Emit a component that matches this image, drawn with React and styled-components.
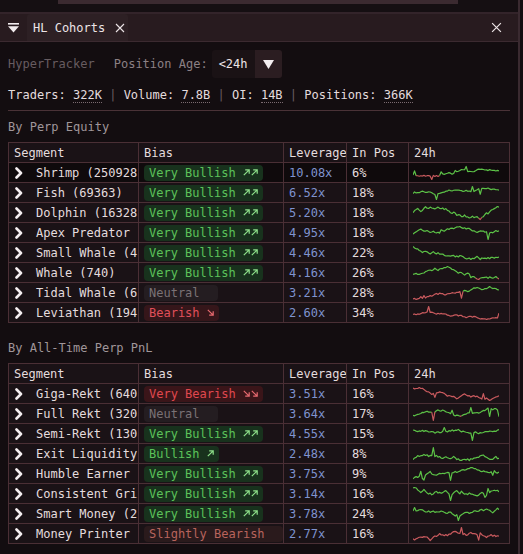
import React from 'react'
import styled, { createGlobalStyle } from 'styled-components'

const GlobalStyle = createGlobalStyle`
  html, body {
    margin: 0;
    padding: 0;
    background: #130d10;
  }
  body {
    font-family: "DejaVu Sans Mono", "Liberation Mono", monospace;
    font-size: 12px;
    color: #e4dcde;
  }
`

const GREEN = '#5cc247'
const RED = '#c95a5e'

const Panel = styled.div`
  width: 520px;
  min-height: 554px;
  box-sizing: border-box;
  border-right: 2px solid #3a2a30;
`

const TopStrip = styled.div`
  height: 12px;
  background: #150f12;
  border-bottom: 2px solid #33242a;
`

const StripBar = styled.div`
  margin-left: 58px;
  width: 400px;
  height: 4px;
  background: #3b2a30;
`

const Header = styled.div`
  height: 27px;
  display: flex;
  align-items: stretch;
  background: #281b1f;
  border-bottom: 1px solid #3b2a30;
`

const MenuIcon = styled.div`
  width: 27px;
  display: flex;
  align-items: center;
  justify-content: center;
`

const Tab = styled.div`
  width: 101px;
  display: flex;
  align-items: center;
  padding-left: 6px;
  box-sizing: border-box;
  background: #2d2024;
  border-top-left-radius: 3px;
  border-top-right-radius: 3px;
  color: #ece4e6;
`

const TabClose = styled.span`
  margin-left: 10px;
  display: flex;
`

const Spacer = styled.div`
  flex: 1;
`

const HeaderClose = styled.div`
  display: flex;
  align-items: center;
  margin-right: 16px;
`

const Content = styled.div`
  padding: 8px 0 0 8px;
`

const FilterRow = styled.div`
  height: 28px;
  display: flex;
  align-items: center;
`

const Label = styled.span`
  color: ${p => p.$dim ? '#675c60' : '#8c8084'};
  margin-left: ${p => p.$gap || 0}px;
`

const Select = styled.div`
  margin-left: 4px;
  height: 28px;
  display: flex;
  border-radius: 3px;
  overflow: hidden;
`

const SelectValue = styled.div`
  width: 43px;
  box-sizing: border-box;
  padding-left: 7px;
  display: flex;
  align-items: center;
  background: #1a1215;
  color: #ece4e6;
`

const SelectButton = styled.div`
  width: 27px;
  display: flex;
  align-items: center;
  justify-content: center;
  background: #2b1d21;
`

const Stats = styled.div`
  margin-top: 7px;
  line-height: 20px;
  white-space: pre;
`

const StatValue = styled.span`
  border-bottom: 1px dotted #7a6a70;
`

const Pipe = styled.span`
  color: #6a5e62;
`

const Rule = styled.div`
  margin-top: 5px;
  width: 502px;
  height: 1px;
  background: #4a3237;
`

const SectionTitle = styled.div`
  margin-top: ${p => p.$top}px;
  line-height: 16px;
  color: #a0969a;
`

const Table = styled.table`
  margin-top: 7px;
  width: 501px;
  border-collapse: collapse;
  table-layout: fixed;
`

const Th = styled.th`
  height: 19px;
  padding: 0 0 0 5px;
  border: 1px solid #4a2f35;
  background: #1a1216;
  text-align: left;
  font-weight: normal;
  color: #e4dcde;
  white-space: nowrap;
  overflow: hidden;
`

const Row = styled.tr`
  background: ${p => p.$dark ? '#0f0a0c' : '#1a1216'};
`

const Td = styled.td`
  height: 19px;
  padding: 0 0 0 ${p => p.$pad ?? 5}px;
  border: 1px solid #4a2f35;
  white-space: nowrap;
  overflow: hidden;
  color: ${p => p.$color || '#e4dcde'};
`

const SegmentInner = styled.div`
  display: flex;
  align-items: center;
  overflow: hidden;
  white-space: nowrap;
`

const Chevron = styled.svg`
  flex: none;
  margin-right: 13px;
`

const BIAS = {
  'Very Bullish': { bg: '#18321d', fg: '#5cc25a', arrows: 2, dir: 'up', ac: '#8ee08a' },
  'Bullish': { bg: '#18321d', fg: '#5cc25a', arrows: 1, dir: 'up', ac: '#8ee08a' },
  'Neutral': { bg: '#241d21', fg: '#7a7275', arrows: 0 },
  'Bearish': { bg: '#35161a', fg: '#e0505a', arrows: 1, dir: 'down', ac: '#e86a70' },
  'Very Bearish': { bg: '#3a1519', fg: '#e0484f', arrows: 2, dir: 'down', ac: '#e86a70' },
  'Slightly Bearish': { bg: '#2a1a1c', fg: '#b8645c', arrows: 0 },
}

const Pill = styled.span`
  display: inline-flex;
  align-items: center;
  height: 16px;
  padding: 0 5px;
  border-radius: 4px;
  background: ${p => p.$bg};
  color: ${p => p.$fg};
  white-space: pre;
  vertical-align: middle;
`

const ArrowBox = styled.span`
  display: inline-flex;
  gap: 1px;
  min-width: 6px;
`

function TrendArrow({ dir, color }) {
  const d = dir === 'up'
    ? 'M0.8 6.2 L6.2 0.8 M2.2 0.8 H6.2 V4.8'
    : 'M0.8 0.8 L6.2 6.2 M6.2 2.2 V6.2 H2.2'
  return (
    <svg width="7" height="7" viewBox="0 0 7 7">
      <path d={d} stroke={color} strokeWidth="1.2" fill="none" />
    </svg>
  )
}

function BiasPill({ bias }) {
  const b = BIAS[bias]
  return (
    <Pill $bg={b.bg} $fg={b.fg}>
      {bias + ' '}
      <ArrowBox>
        {Array.from({ length: b.arrows }, (_, i) => (
          <TrendArrow key={i} dir={b.dir} color={b.ac} />
        ))}
      </ArrowBox>
    </Pill>
  )
}

function rng(seed) {
  let s = seed
  return () => {
    s = (s * 16807) % 2147483647
    return (s - 1) / 2147483646
  }
}

function makeSeries(seed, trend, vol) {
  const r = rng(seed)
  const pts = []
  let v = 0
  for (let i = 0; i < 56; i++) {
    v += (r() - 0.5) * vol + trend
    let p = v
    if (r() < 0.06) p += (r() - 0.5) * vol * 6
    pts.push(p)
  }
  const min = Math.min(...pts)
  const max = Math.max(...pts)
  return pts.map(p => (p - min) / (max - min || 1))
}

function Sparkline({ seed, trend = 0, vol = 1, base = 0.1 }) {
  const data = makeSeries(seed, trend, vol)
  const w = 86
  const h = 16
  const xy = (v, i) => [(i / (data.length - 1)) * w, 1.5 + (1 - v) * (h - 3)]
  const groups = []
  for (let i = 1; i < data.length; i++) {
    const color = (data[i - 1] + data[i]) / 2 >= base ? GREEN : RED
    const last = groups[groups.length - 1]
    if (last && last.color === color) {
      last.pts.push(xy(data[i], i))
    } else {
      groups.push({ color, pts: [xy(data[i - 1], i - 1), xy(data[i], i)] })
    }
  }
  return (
    <svg width={w} height={h} style={{ display: 'block' }}>
      {groups.map((g, i) => (
        <polyline
          key={i}
          points={g.pts.map(p => p.join(',')).join(' ')}
          fill="none"
          stroke={g.color}
          strokeWidth="1.2"
          strokeLinejoin="round"
        />
      ))}
    </svg>
  )
}

// names are cut by the column, as in the app
const equity = [
  { name: 'Shrimp (250928', bias: 'Very Bullish', lev: '10.08x', pos: '6%', spark: { seed: 11, vol: 0.4, base: 0.3 } },
  { name: 'Fish (69363)', bias: 'Very Bullish', lev: '6.52x', pos: '18%', spark: { seed: 23, vol: 1 } },
  { name: 'Dolphin (16328', bias: 'Very Bullish', lev: '5.20x', pos: '18%', spark: { seed: 37, vol: 1 } },
  { name: 'Apex Predator', bias: 'Very Bullish', lev: '4.95x', pos: '18%', spark: { seed: 41, vol: 1.4, base: 0 } },
  { name: 'Small Whale (4', bias: 'Very Bullish', lev: '4.46x', pos: '22%', spark: { seed: 53, vol: 1.3, base: 0.05 } },
  { name: 'Whale (740)', bias: 'Very Bullish', lev: '4.16x', pos: '26%', spark: { seed: 67, vol: 1.2, base: 0.08 } },
  { name: 'Tidal Whale (6', bias: 'Neutral', lev: '3.21x', pos: '28%', spark: { seed: 79, vol: 1, base: 0.6 } },
  { name: 'Leviathan (194', bias: 'Bearish', lev: '2.60x', pos: '34%', spark: { seed: 83, vol: 1, trend: -0.05, base: 2 } },
]

const pnl = [
  { name: 'Giga-Rekt (640', bias: 'Very Bearish', lev: '3.51x', pos: '16%', spark: { seed: 97, vol: 1, trend: -0.05, base: 2 } },
  { name: 'Full Rekt (320', bias: 'Neutral', lev: '3.64x', pos: '17%', spark: { seed: 101, vol: 1.1, base: 0.35 } },
  { name: 'Semi-Rekt (130', bias: 'Very Bullish', lev: '4.55x', pos: '15%', spark: { seed: 113, vol: 0.8, base: 0.25 } },
  { name: 'Exit Liquidity', bias: 'Bullish', lev: '2.48x', pos: '8%', spark: { seed: 127, vol: 1, base: 0 } },
  { name: 'Humble Earner', bias: 'Very Bullish', lev: '3.75x', pos: '9%', spark: { seed: 131, vol: 1.5, base: 0 } },
  { name: 'Consistent Gri', bias: 'Very Bullish', lev: '3.14x', pos: '16%', spark: { seed: 149, vol: 0.7, base: 0 } },
  { name: 'Smart Money (2', bias: 'Very Bullish', lev: '3.78x', pos: '24%', spark: { seed: 157, vol: 1.2, base: 0 } },
  { name: 'Money Printer', bias: 'Slightly Bearish', lev: '2.77x', pos: '16%', spark: { seed: 163, vol: 1, base: 2 } },
]

function CohortTable({ rows, darkFirst }) {
  return (
    <Table>
      <colgroup>
        <col style={{ width: 130 }} />
        <col style={{ width: 145 }} />
        <col style={{ width: 63 }} />
        <col style={{ width: 62 }} />
        <col style={{ width: 101 }} />
      </colgroup>
      <thead>
        <tr>
          <Th>Segment</Th>
          <Th>Bias</Th>
          <Th>Leverage</Th>
          <Th>In Pos</Th>
          <Th>24h</Th>
        </tr>
      </thead>
      <tbody>
        {rows.map((r, i) => (
          <Row key={r.name} $dark={darkFirst && i === 0}>
            <Td $pad={6}>
              <SegmentInner>
                <Chevron width="8" height="12" viewBox="0 0 8 12">
                  <polyline points="1.5,1.5 6,6 1.5,10.5" fill="none" stroke="#f4eef0" strokeWidth="2.6" strokeLinecap="round" strokeLinejoin="round" />
                </Chevron>
                {r.name}
              </SegmentInner>
            </Td>
            <Td><BiasPill bias={r.bias} /></Td>
            <Td $color="#7f93cf">{r.lev}</Td>
            <Td>{r.pos}</Td>
            <Td $pad={4}><Sparkline {...r.spark} /></Td>
          </Row>
        ))}
      </tbody>
    </Table>
  )
}

function XIcon({ size }) {
  return (
    <svg width={size} height={size} viewBox="0 0 10 10">
      <path d="M1 1 L9 9 M9 1 L1 9" stroke="#ece4e6" strokeWidth="1.1" fill="none" />
    </svg>
  )
}

export default function App() {
  return (
    <>
      <GlobalStyle />
      <Panel>
        <TopStrip>
          <StripBar />
        </TopStrip>
        <Header>
          <MenuIcon>
            <svg width="11" height="10" viewBox="0 0 11 10">
              <rect x="0" y="0" width="11" height="1.6" fill="#f2ecee" />
              <polygon points="0,3.2 11,3.2 5.5,9.5" fill="#f2ecee" />
            </svg>
          </MenuIcon>
          <Tab>
            HL Cohorts
            <TabClose><XIcon size={10} /></TabClose>
          </Tab>
          <Spacer />
          <HeaderClose><XIcon size={11} /></HeaderClose>
        </Header>
        <Content>
          <FilterRow>
            <Label $dim>HyperTracker</Label>
            <Label $gap={19}>Position Age:</Label>
            <Select>
              <SelectValue>&lt;24h</SelectValue>
              <SelectButton>
                <svg width="11" height="9" viewBox="0 0 11 9">
                  <polygon points="0,0 11,0 5.5,9" fill="#f4eef0" />
                </svg>
              </SelectButton>
            </Select>
          </FilterRow>
          <Stats>
            Traders: <StatValue>322K</StatValue><Pipe> | </Pipe>
            Volume: <StatValue>7.8B</StatValue><Pipe> | </Pipe>
            OI: <StatValue>14B</StatValue><Pipe> | </Pipe>
            Positions: <StatValue>366K</StatValue>
          </Stats>
          <Rule />
          <SectionTitle $top={8}>By Perp Equity</SectionTitle>
          <CohortTable rows={equity} darkFirst />
          <SectionTitle $top={17}>By All-Time Perp PnL</SectionTitle>
          <CohortTable rows={pnl} />
        </Content>
      </Panel>
    </>
  )
}
